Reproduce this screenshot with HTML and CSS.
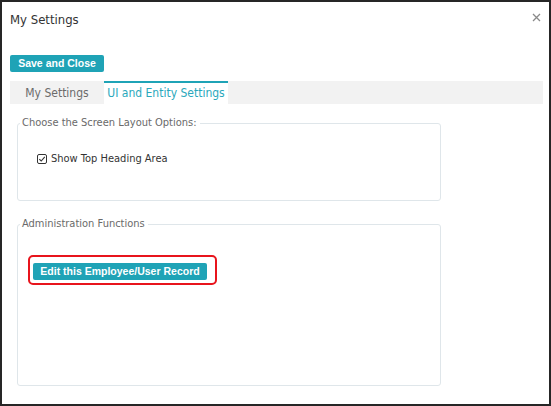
FILE: index.html
```html
<!DOCTYPE html>
<html>
<head>
<meta charset="utf-8">
<title>My Settings</title>
<link rel="stylesheet" href="styles.css">
</head>
<body>
<div class="dialog">
  <div class="dialog-header">
    <span class="dialog-title">My Settings</span>
    <span class="dialog-close" aria-label="Close">
      <svg width="9" height="9" viewBox="0 0 9 9"><path d="M1 1L8 8M8 1L1 8" stroke="#8a8a8a" stroke-width="1.3" fill="none"/></svg>
    </span>
  </div>
  <button class="btn btn-save">Save and Close</button>
  <div class="tabs">
    <span class="tab">My Settings</span>
    <span class="tab tab-active">UI and Entity Settings</span>
  </div>
  <fieldset class="group group-layout">
    <legend>Choose the Screen Layout Options:</legend>
    <label class="check-row">
      <span class="check-box">
        <svg width="8" height="8" viewBox="0 0 8 8"><path d="M1.3 4.2L3.2 6L6.8 1.8" stroke="#333" stroke-width="1.1" fill="none"/></svg>
      </span>
      Show Top Heading Area
    </label>
  </fieldset>
  <fieldset class="group group-admin">
    <legend>Administration Functions</legend>
    <div class="highlight">
      <button class="btn btn-edit">Edit this Employee/User Record</button>
    </div>
  </fieldset>
</div>
</body>
</html>
```
FILE: styles.css
```css
* { box-sizing: border-box; }

html, body {
  margin: 0;
  background: #fff;
}

body {
  font-family: "DejaVu Sans Condensed", "DejaVu Sans", sans-serif;
  color: #333;
}

.dialog {
  width: 551px;
  height: 406px;
  border: 2px solid #262626;
  padding: 0 6px 0 8px;
  display: flex;
  flex-direction: column;
  align-items: flex-start;
}

.dialog-header {
  align-self: stretch;
  display: flex;
  justify-content: space-between;
  align-items: flex-start;
  height: 53px;
  padding-top: 9px;
}

.dialog-title {
  font-size: 13px;
  line-height: 18px;
  color: #333;
}

.dialog-close {
  display: flex;
  margin-top: 2px;
  margin-right: 2px;
}

.btn {
  border: 0;
  border-radius: 2px;
  background: #1fa3b6;
  color: #fff;
  font-family: "Liberation Sans", Arial, sans-serif;
  font-weight: bold;
  font-size: 10.5px;
  line-height: 17px;
  height: 17px;
  padding: 0;
  text-align: center;
  white-space: nowrap;
}

.btn-save {
  width: 94px;
}

.tabs {
  align-self: stretch;
  margin-top: 9px;
  height: 23px;
  background: #f2f2f2;
  display: flex;
}

.tab {
  font-size: 12px;
  line-height: 21px;
  padding: 2px 0 0;
  width: 94px;
  text-align: center;
  color: #6b6b6b;
}

.tab-active {
  width: 124px;
  background: #fff;
  border-top: 2px solid #1fa3b6;
  padding-top: 0;
  color: #2aa8bc;
}

.group {
  margin: 12px 0 0 7px;
  width: 424px;
  border: 1px solid #dfe6ea;
  border-radius: 3px;
  padding: 0;
}

.group legend {
  font-size: 11px;
  line-height: 14px;
  color: #6a6a6a;
  padding: 0 3px 0 2px;
  margin-left: 2px;
}

.group-layout {
  height: 85px;
}

.group-admin {
  margin-top: 16px;
  height: 169px;
}

.check-row {
  display: flex;
  align-items: center;
  font-size: 11px;
  line-height: 14px;
  color: #333;
  margin: 22px 0 0 19px;
}

.check-box {
  width: 10px;
  height: 10px;
  border: 1px solid #333;
  border-radius: 2px;
  display: flex;
  align-items: center;
  justify-content: center;
  margin-right: 4px;
}

.highlight {
  display: inline-block;
  margin: 24px 0 0 10px;
  border: 2px solid #e8141c;
  border-radius: 5px;
  padding: 6px 8px 3px 3px;
}

.btn-edit {
  display: block;
  width: 174px;
}
```
